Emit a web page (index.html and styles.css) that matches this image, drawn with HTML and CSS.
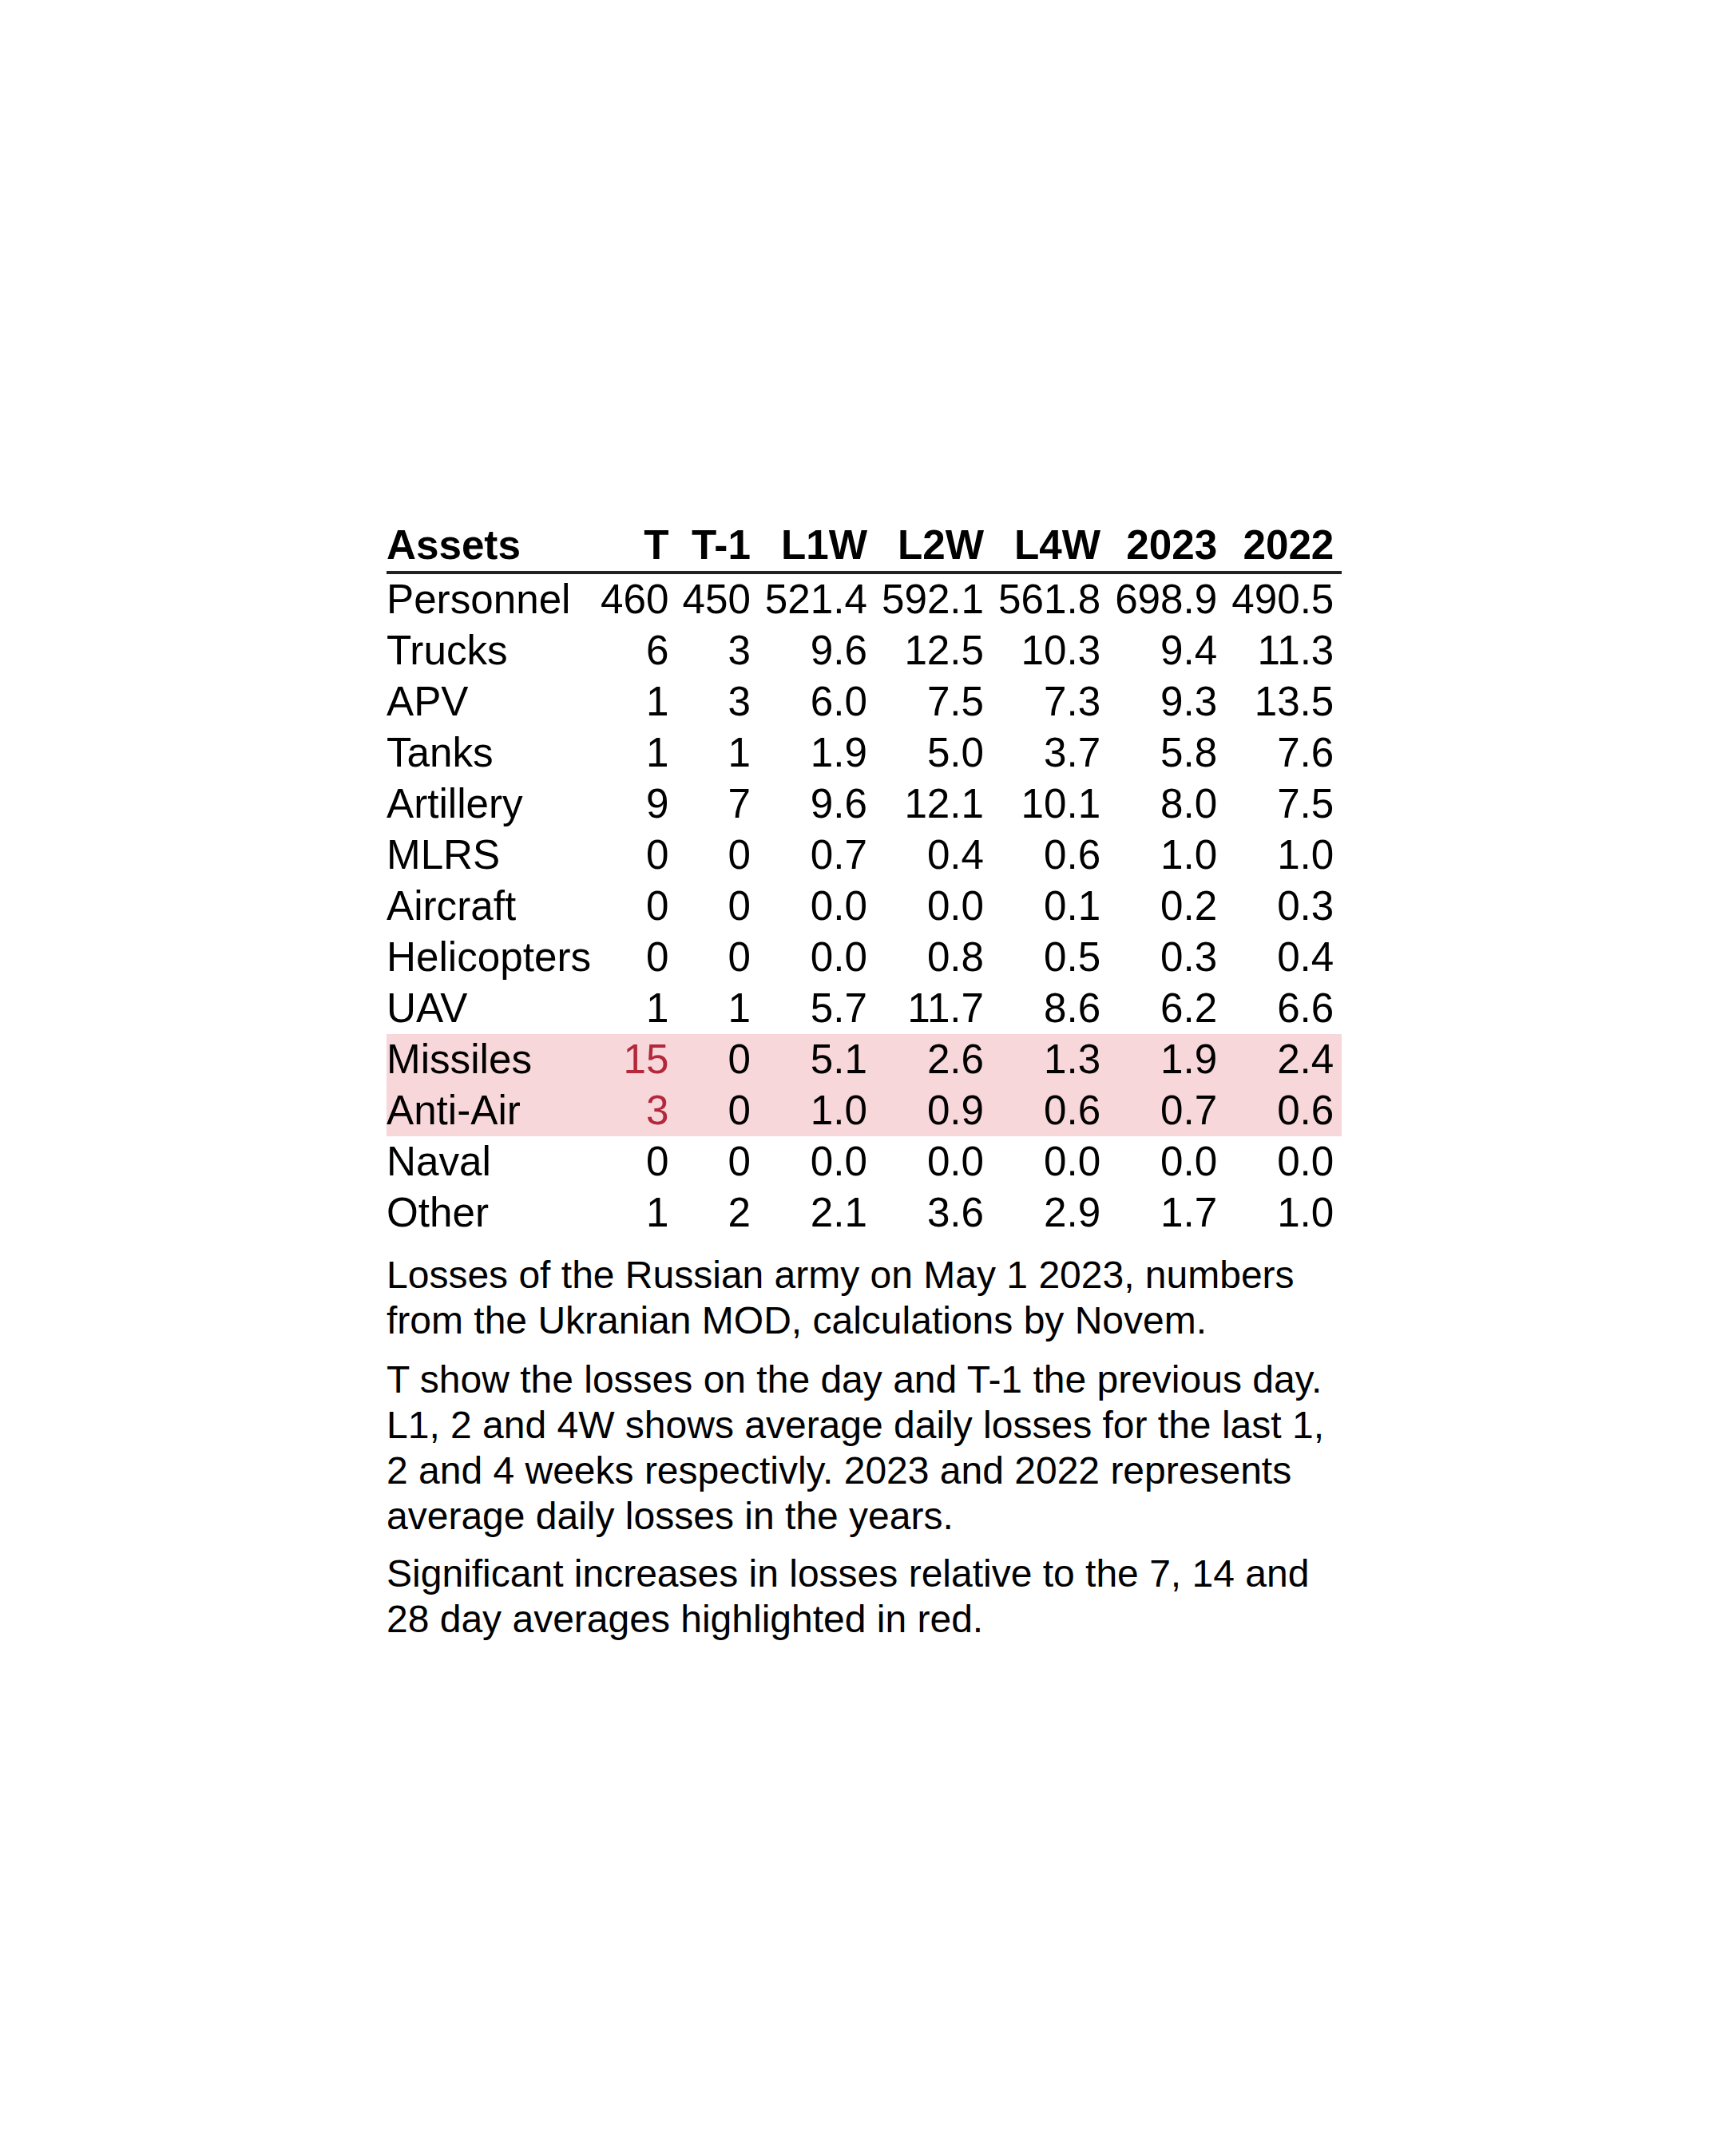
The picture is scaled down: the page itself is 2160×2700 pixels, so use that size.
FILE: index.html
```html
<!DOCTYPE html>
<html lang="en">
<head>
<meta charset="utf-8">
<title>Losses of the Russian army</title>
<link rel="stylesheet" href="styles.css">
</head>
<body>
<main class="page">
  <table class="losses">
    <thead>
      <tr>
        <th class="asset">Assets</th>
        <th class="t">T</th>
        <th class="t1">T-1</th>
        <th class="avg">L1W</th>
        <th class="avg">L2W</th>
        <th class="avg">L4W</th>
        <th class="avg">2023</th>
        <th class="avg last">2022</th>
      </tr>
    </thead>
    <tbody>
      <tr><td class="asset">Personnel</td><td class="t">460</td><td class="t1">450</td><td class="avg">521.4</td><td class="avg">592.1</td><td class="avg">561.8</td><td class="avg">698.9</td><td class="avg last">490.5</td></tr>
      <tr><td class="asset">Trucks</td><td class="t">6</td><td class="t1">3</td><td class="avg">9.6</td><td class="avg">12.5</td><td class="avg">10.3</td><td class="avg">9.4</td><td class="avg last">11.3</td></tr>
      <tr><td class="asset">APV</td><td class="t">1</td><td class="t1">3</td><td class="avg">6.0</td><td class="avg">7.5</td><td class="avg">7.3</td><td class="avg">9.3</td><td class="avg last">13.5</td></tr>
      <tr><td class="asset">Tanks</td><td class="t">1</td><td class="t1">1</td><td class="avg">1.9</td><td class="avg">5.0</td><td class="avg">3.7</td><td class="avg">5.8</td><td class="avg last">7.6</td></tr>
      <tr><td class="asset">Artillery</td><td class="t">9</td><td class="t1">7</td><td class="avg">9.6</td><td class="avg">12.1</td><td class="avg">10.1</td><td class="avg">8.0</td><td class="avg last">7.5</td></tr>
      <tr><td class="asset">MLRS</td><td class="t">0</td><td class="t1">0</td><td class="avg">0.7</td><td class="avg">0.4</td><td class="avg">0.6</td><td class="avg">1.0</td><td class="avg last">1.0</td></tr>
      <tr><td class="asset">Aircraft</td><td class="t">0</td><td class="t1">0</td><td class="avg">0.0</td><td class="avg">0.0</td><td class="avg">0.1</td><td class="avg">0.2</td><td class="avg last">0.3</td></tr>
      <tr><td class="asset">Helicopters</td><td class="t">0</td><td class="t1">0</td><td class="avg">0.0</td><td class="avg">0.8</td><td class="avg">0.5</td><td class="avg">0.3</td><td class="avg last">0.4</td></tr>
      <tr><td class="asset">UAV</td><td class="t">1</td><td class="t1">1</td><td class="avg">5.7</td><td class="avg">11.7</td><td class="avg">8.6</td><td class="avg">6.2</td><td class="avg last">6.6</td></tr>
      <tr class="flag"><td class="asset">Missiles</td><td class="t alert">15</td><td class="t1">0</td><td class="avg">5.1</td><td class="avg">2.6</td><td class="avg">1.3</td><td class="avg">1.9</td><td class="avg last">2.4</td></tr>
      <tr class="flag"><td class="asset">Anti-Air</td><td class="t alert">3</td><td class="t1">0</td><td class="avg">1.0</td><td class="avg">0.9</td><td class="avg">0.6</td><td class="avg">0.7</td><td class="avg last">0.6</td></tr>
      <tr><td class="asset">Naval</td><td class="t">0</td><td class="t1">0</td><td class="avg">0.0</td><td class="avg">0.0</td><td class="avg">0.0</td><td class="avg">0.0</td><td class="avg last">0.0</td></tr>
      <tr><td class="asset">Other</td><td class="t">1</td><td class="t1">2</td><td class="avg">2.1</td><td class="avg">3.6</td><td class="avg">2.9</td><td class="avg">1.7</td><td class="avg last">1.0</td></tr>
    </tbody>
  </table>
  <p class="note">Losses of the Russian army on May 1 2023, numbers from the Ukranian MOD, calculations by Novem.</p>
  <p class="note">T show the losses on the day and T-1 the previous day. L1, 2 and 4W shows average daily losses for the last 1, 2 and 4 weeks respectivly. 2023 and 2022 represents average daily losses in the years.</p>
  <p class="note last-note">Significant increases in losses relative to the 7, 14 and 28 day averages highlighted in red.</p>
</main>
</body>
</html>
```
FILE: styles.css
```css
html, body {
  margin: 0;
  padding: 0;
  background: #ffffff;
}

body {
  font-family: "Liberation Sans", Arial, sans-serif;
  color: #000000;
}

.page {
  width: 1196px;
  margin-left: 484px;
  padding-top: 651px;
}

.losses {
  border-collapse: collapse;
  border-spacing: 0;
  font-size: 51.2px;
  line-height: 64px;
}

.losses th,
.losses td {
  padding: 0;
  white-space: nowrap;
  text-align: right;
  vertical-align: baseline;
}

.losses th {
  font-weight: bold;
  border-bottom: 4px solid #222222;
}

.losses .asset {
  text-align: left;
  padding-left: 0;
}

.losses .t {
  padding-left: 12px;
}

.losses .t1 {
  padding-left: 17px;
}

.losses .avg {
  padding-left: 18px;
}

.losses .last {
  padding-right: 10px;
}

.losses .flag td {
  background: #f8d7da;
}

.losses .alert {
  color: #b3283a;
}

.note {
  margin: 17px 0 0;
  font-size: 48px;
  line-height: 57px;
}

.note.last-note {
  margin-top: 15px;
}
```
